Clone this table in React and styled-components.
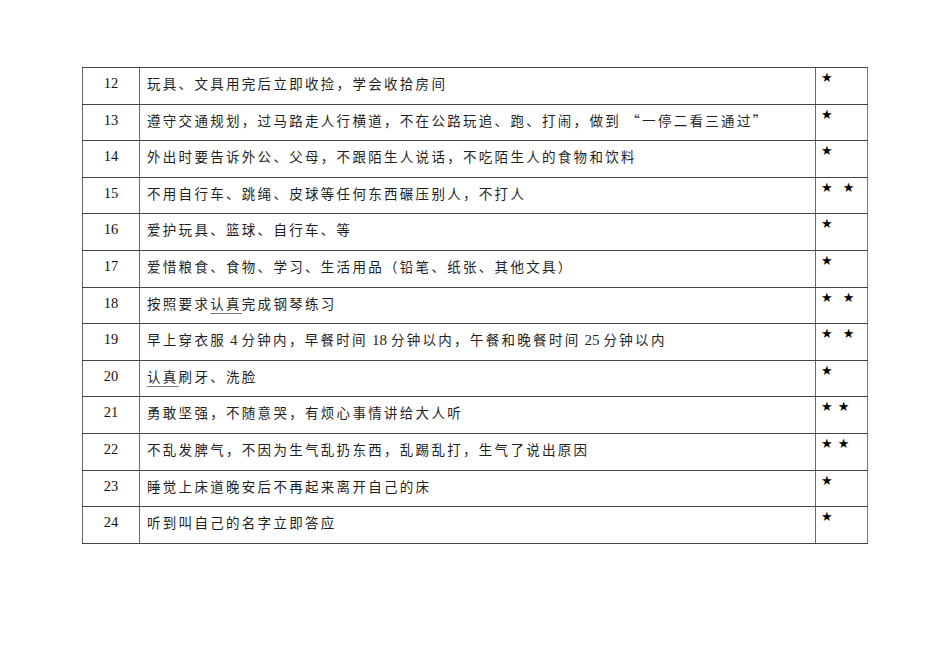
import React from 'react';
import styled, { createGlobalStyle } from 'styled-components';

const GlobalStyle = createGlobalStyle`
  html, body {
    margin: 0;
    padding: 0;
    background: #fff;
  }
`;

const Page = styled.div`
  width: 950px;
  height: 672px;
  box-sizing: border-box;
  padding: 67px 0 0 82px;
  background: #fff;
`;

const Table = styled.table`
  border-collapse: collapse;
  table-layout: fixed;
  width: 785px;
  border-left: 1px solid #666;
  border-right: 1px solid #777;
`;

const Row = styled.tr`
  height: 36.6px;
`;

const Cell = styled.td`
  border-top: 1px solid #444;
  border-bottom: 1px solid #444;
  border-left: 1px solid #666;
  padding: 0;
  vertical-align: top;
  box-sizing: border-box;
`;

const NumCell = styled(Cell)`
  width: 57px;
  text-align: center;
  font-family: "Liberation Serif", "Noto Sans CJK SC", serif;
  font-size: 14.5px;
  line-height: 20px;
  padding-top: 5px;
  color: #111;
`;

const TextCell = styled(Cell)`
  width: 676px;
  padding: 5px 0 0 7px;
  font-family: "Noto Sans CJK SC", sans-serif;
  font-size: 13.5px;
  letter-spacing: 2.3px;
  line-height: 20px;
  color: #1f1f1f;
  white-space: nowrap;
`;

const Latin = styled.span`
  font-family: "Liberation Serif", serif;
  font-size: 15px;
  letter-spacing: 0;
  margin: 0 4px;
`;

const Stressed = styled.span`
  text-decoration: underline;
  text-decoration-color: #777;
  text-underline-offset: 4px;
`;

const StarCell = styled(Cell)`
  width: 52px;
  padding: 3px 0 0 5px;
  font-family: "DejaVu Sans", sans-serif;
  font-size: 13px;
  line-height: 14px;
  color: #000;
`;

const Star = styled.span`
  display: inline-block;
  margin-right: ${({ gap }) => gap}px;
`;

// segments: plain string, { u: '...' } underlined, { l: '...' } latin
const rows = [
  { n: 12, text: ['玩具、文具用完后立即收捡，学会收拾房间'], stars: 1 },
  { n: 13, text: ['遵守交通规划，过马路走人行横道，不在公路玩追、跑、打闹，做到 “一停二看三通过”'], stars: 1 },
  { n: 14, text: ['外出时要告诉外公、父母，不跟陌生人说话，不吃陌生人的食物和饮料'], stars: 1 },
  { n: 15, text: ['不用自行车、跳绳、皮球等任何东西碾压别人，不打人'], stars: 2, gap: 10 },
  { n: 16, text: ['爱护玩具、篮球、自行车、等'], stars: 1 },
  { n: 17, text: ['爱惜粮食、食物、学习、生活用品（铅笔、纸张、其他文具）'], stars: 1 },
  { n: 18, text: ['按照要求', { u: '认真' }, '完成钢琴练习'], stars: 2, gap: 10 },
  {
    n: 19,
    text: ['早上穿衣服', { l: '4' }, '分钟内，早餐时间', { l: '18' }, '分钟以内，午餐和晚餐时间', { l: '25' }, '分钟以内'],
    stars: 2,
    gap: 10,
  },
  { n: 20, text: [{ u: '认真' }, '刷牙、洗脸'], stars: 1 },
  { n: 21, text: ['勇敢坚强，不随意哭，有烦心事情讲给大人听'], stars: 2, gap: 5 },
  { n: 22, text: ['不乱发脾气，不因为生气乱扔东西，乱踢乱打，生气了说出原因'], stars: 2, gap: 5 },
  { n: 23, text: ['睡觉上床道晚安后不再起来离开自己的床'], stars: 1 },
  { n: 24, text: ['听到叫自己的名字立即答应'], stars: 1 },
];

function RuleText({ parts }) {
  return parts.map((p, i) => {
    if (typeof p === 'string') return <React.Fragment key={i}>{p}</React.Fragment>;
    if (p.u) return <Stressed key={i}>{p.u}</Stressed>;
    return <Latin key={i}>{p.l}</Latin>;
  });
}

export default function App() {
  return (
    <Page>
      <GlobalStyle />
      <Table>
        <tbody>
          {rows.map(row => (
            <Row key={row.n}>
              <NumCell>{row.n}</NumCell>
              <TextCell lang="zh-CN">
                <RuleText parts={row.text} />
              </TextCell>
              <StarCell>
                {Array.from({ length: row.stars }).map((_, i) => (
                  <Star key={i} gap={row.gap || 0}>★</Star>
                ))}
              </StarCell>
            </Row>
          ))}
        </tbody>
      </Table>
    </Page>
  );
}
